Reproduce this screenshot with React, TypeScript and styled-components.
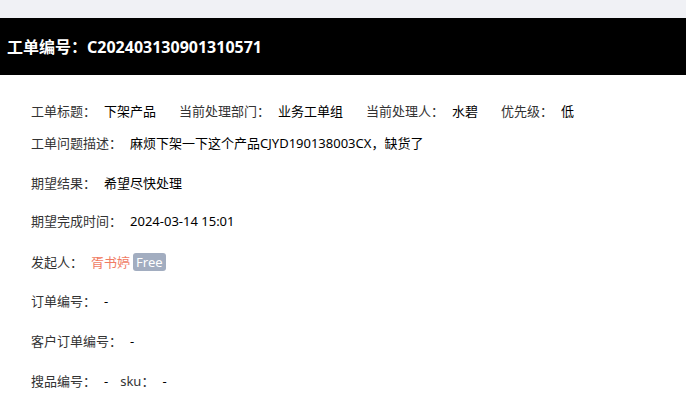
import React from 'react';
import styled, {createGlobalStyle} from "styled-components";

const GlobalStyle = createGlobalStyle`
  html, body {
    margin: 0;
    padding: 0;
    background: #ffffff;
  }
  body {
    font-family: "Noto Sans", "Noto Sans CJK SC", sans-serif;
    font-size: 13px;
    color: #000;
  }
`

interface Field {
    label: string
    value: React.ReactNode
}

const headFields: Field[] = [
    {label: "工单标题：", value: "下架产品"},
    {label: "当前处理部门：", value: "业务工单组"},
    {label: "当前处理人：", value: "水碧"},
    {label: "优先级：", value: "低"},
]

export default function App() {
    return (
        <>
            <GlobalStyle/>
            <Page>
                <TopStrip/>
                <Header>
                    <HeaderTitle>工单编号：C202403130901310571</HeaderTitle>
                </Header>
                <Body>
                    <Row $gap={12}>
                        {headFields.map(f =>
                            <Item key={f.label}>
                                <Label>{f.label}</Label>
                                <Value>{f.value}</Value>
                            </Item>
                        )}
                    </Row>
                    <Row $gap={20}>
                        <Item>
                            <Label>工单问题描述：</Label>
                            <Value>麻烦下架一下这个产品CJYD190138003CX，缺货了</Value>
                        </Item>
                    </Row>
                    <Row $gap={18}>
                        <Item>
                            <Label>期望结果：</Label>
                            <Value>希望尽快处理</Value>
                        </Item>
                    </Row>
                    <Row $gap={21}>
                        <Item>
                            <Label>期望完成时间：</Label>
                            <Value>2024-03-14 15:01</Value>
                        </Item>
                    </Row>
                    <Row $gap={19}>
                        <Item>
                            <Label>发起人：</Label>
                            <Person>胥书婷</Person>
                            <Badge>Free</Badge>
                        </Item>
                    </Row>
                    <Row $gap={20}>
                        <Item>
                            <Label>订单编号：</Label>
                            <Value>-</Value>
                        </Item>
                    </Row>
                    <Row $gap={20}>
                        <Item>
                            <Label>客户订单编号：</Label>
                            <Value>-</Value>
                        </Item>
                    </Row>
                    <Row $gap={20}>
                        <Item>
                            <Label>搜品编号：</Label>
                            <Value>-</Value>
                        </Item>
                        <SubItem>
                            <Label>sku：</Label>
                            <Value>-</Value>
                        </SubItem>
                    </Row>
                </Body>
            </Page>
        </>
    );
}

const Page = styled.div`
  width: 686px;
  min-height: 401px;
  display: flex;
  flex-direction: column;
`
const TopStrip = styled.div`
  height: 18px;
  background: #f0f1f5;
`
const Header = styled.div`
  height: 57px;
  background: #000000;
  display: flex;
  align-items: center;
  padding: 0 7px;
`
const HeaderTitle = styled.h1`
  margin: 0;
  font-size: 16px;
  font-weight: 700;
  line-height: 22px;
  color: #ffffff;
`
const Body = styled.div`
  padding: 26px 31px 0;
  display: flex;
  flex-direction: column;
`
const Row = styled.div<{$gap: number}>`
  display: flex;
  align-items: center;
  gap: 23px;
  line-height: 20px;
  margin-bottom: ${p => p.$gap}px;
`
const Item = styled.div`
  display: flex;
  align-items: center;
`
const SubItem = styled(Item)`
  margin-left: -11px;
`
const Label = styled.span`
  color: #333333;
  margin-right: 8px;
`
const Value = styled.span`
  color: #000000;
`
const Person = styled.span`
  color: #f07b63;
  margin-right: 3px;
`
const Badge = styled.span`
  background: #a2adc0;
  color: #ffffff;
  border-radius: 3px;
  padding: 0 3px;
  line-height: 18px;
  font-size: 13px;
`
